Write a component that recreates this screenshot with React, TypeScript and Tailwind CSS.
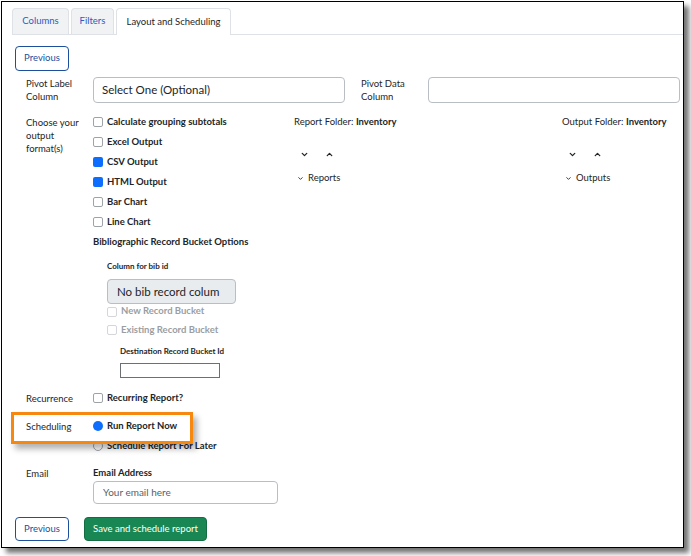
import { ChevronDown, ChevronUp } from "lucide-react";

// ── small pieces ─────────────────────────────────────────────────────────────

function Box({ checked = false, disabled = false }: { checked?: boolean; disabled?: boolean }) {
  if (checked) return <span className="inline-block h-[10px] w-[10px] shrink-0 rounded-[2px] bg-[#0d6efd]" />;
  return (
    <span
      className={`inline-block h-[10px] w-[10px] shrink-0 rounded-[2px] border bg-white ${
        disabled ? "border-[#d4d6d9]" : "border-[#9ea3a8]"
      }`}
    />
  );
}

function Check({ label, checked = false }: { label: string; checked?: boolean }) {
  return (
    <div className="flex h-[20px] items-center gap-[4px]">
      <Box checked={checked} />
      <span className="font-bold text-[#212529]">{label}</span>
    </div>
  );
}

function Label({ children }: { children: React.ReactNode }) {
  return <div className="w-[78px] shrink-0 pl-[11px] leading-[13px] text-[#212529]">{children}</div>;
}

function Folder({ title, name }: { title: string; name: string }) {
  return (
    <div className="flex flex-col">
      <div className="flex h-[20px] items-center text-[#212529]">
        {title}&nbsp;<span className="font-bold">Inventory</span>
      </div>
      <div className="mt-[16px] flex h-[12px] items-center gap-[16px] pl-[6px]">
        <ChevronDown size={9} strokeWidth={3.5} className="text-[#212529]" />
        <ChevronUp size={9} strokeWidth={3.5} className="text-[#212529]" />
      </div>
      <div className="mt-[12px] flex h-[12px] items-center gap-[4px] pl-[3px] text-[#212529]">
        <ChevronDown size={7} strokeWidth={3} />
        <span>{name}</span>
      </div>
    </div>
  );
}

// ── page ──────────────────────────────────────────────────────────────────────

export default function App() {
  return (
    <div
      className="relative h-[556px] w-[691px] overflow-hidden bg-white text-[9.5px]"
      style={{ fontFamily: 'Lato, "Noto Sans", sans-serif' }}
    >
      <div className="ml-[1px] mt-[1px] h-[547px] w-[683px] border border-black bg-white pt-[7px] shadow-[5px_5px_5px_rgba(0,0,0,0.55)]">
        {/* Tabs */}
        <div className="ml-[10px] flex h-[26px] items-end gap-[2px] border-b border-[#dee2e6]">
          <div className="flex h-[26px] w-[57px] items-center justify-center rounded-t-[4px] border border-b-0 border-[#dee2e6] bg-[#f1f2f4] text-[#2c5bc4]">
            Columns
          </div>
          <div className="flex h-[26px] w-[43px] items-center justify-center rounded-t-[4px] border border-b-0 border-[#dee2e6] bg-[#f1f2f4] text-[#2c5bc4]">
            Filters
          </div>
          <div className="-mb-px flex h-[27px] w-[115px] items-center justify-center rounded-t-[4px] border border-b-0 border-[#dee2e6] bg-white text-[#212529]">
            Layout and Scheduling
          </div>
        </div>

        <div className="pl-[13px]">
          <button className="mt-[11px] flex h-[25px] w-[54px] items-center justify-center rounded-[4px] border border-[#1c4f9c] text-[#1c4f9c]">
            Previous
          </button>

          {/* Pivot row */}
          <div className="mt-[6px] flex h-[26px] items-center">
            <Label>
              Pivot Label
              <br />
              Column
            </Label>
            <div className="flex h-[26px] w-[252px] items-center rounded-[4px] border border-[#b9bec4] pl-[8px] text-[11.5px] text-[#212529]">
              Select One (Optional)
            </div>
            <div className="ml-[16px] w-[67px] shrink-0 leading-[13px] text-[#212529]">
              Pivot Data
              <br />
              Column
            </div>
            <div className="h-[26px] w-[252px] rounded-[4px] border border-[#b9bec4]" />
          </div>

          {/* Output formats */}
          <div className="mt-[9px] flex">
            <div className="pt-[4px]">
              <Label>
                Choose your
                <br />
                output
                <br />
                format(s)
              </Label>
            </div>
            <div className="w-[201px] shrink-0">
              <Check label="Calculate grouping subtotals" />
              <Check label="Excel Output" />
              <Check label="CSV Output" checked />
              <Check label="HTML Output" checked />
              <Check label="Bar Chart" />
              <Check label="Line Chart" />
              <div className="flex h-[20px] items-center font-bold text-[#212529]">Bibliographic Record Bucket Options</div>

              <div className="pl-[14px]">
                <div className="mt-[8px] flex h-[12px] items-center text-[8px] font-bold text-[#212529]">Column for bib id</div>
                <div className="mt-[7px] flex h-[25px] w-[129px] items-center overflow-hidden whitespace-nowrap rounded-[4px] border border-[#b9bec4] bg-[#e9ecef] pl-[9px] text-[11.5px] text-[#212529]">
                  No bib record colum
                </div>
                <div className="flex h-[15px] items-center gap-[4px] text-[#9a9ea3]">
                  <Box disabled />
                  <span className="font-bold">New Record Bucket</span>
                </div>
                <div className="flex h-[22px] items-center gap-[4px] text-[#9a9ea3]">
                  <Box disabled />
                  <span className="font-bold">Existing Record Bucket</span>
                </div>
                <div className="pl-[13px]">
                  <div className="mt-[1px] flex h-[18px] items-center text-[8px] font-bold text-[#212529]">
                    Destination Record Bucket Id
                  </div>
                  <div className="mt-[3px] h-[15px] w-[100px] border border-[#6c6f73]" />
                </div>
              </div>
            </div>
            <div className="w-[268px] shrink-0">
              <Folder title="Report Folder:" name="Reports" />
            </div>
            <div>
              <Folder title="Output Folder:" name="Outputs" />
            </div>
          </div>

          {/* Recurrence */}
          <div className="mt-[10px] flex h-[20px] items-center">
            <Label>Recurrence</Label>
            <Check label="Recurring Report?" />
          </div>

          {/* Scheduling */}
          <div className="mt-[8px] flex">
            <Label>
              <div className="flex h-[20px] items-center">Scheduling</div>
            </Label>
            <div>
              <div className="flex h-[20px] items-center gap-[4px]">
                <span className="inline-block h-[10px] w-[10px] rounded-full bg-[#0d6efd]" />
                <span className="font-bold text-[#212529]">Run Report Now</span>
              </div>
              <div className="flex h-[20px] items-center gap-[4px]">
                <span className="inline-block h-[10px] w-[10px] rounded-full border border-[#9ea3a8] bg-white" />
                <span className="font-bold text-[#212529]">Schedule Report For Later</span>
              </div>
            </div>
          </div>

          {/* Email */}
          <div className="mt-[10px] flex">
            <Label>
              <div className="flex h-[14px] items-center">Email</div>
            </Label>
            <div>
              <div className="flex h-[14px] items-center font-bold text-[#212529]">Email Address</div>
              <div className="mt-[1px] flex h-[23px] w-[185px] items-center rounded-[4px] border border-[#b9bec4] pl-[9px] text-[10px] text-[#5a5f64]">
                Your email here
              </div>
            </div>
          </div>

          {/* Footer buttons */}
          <div className="mt-[13px] flex items-center gap-[15px]">
            <button className="flex h-[24px] w-[54px] items-center justify-center rounded-[4px] border border-[#1c4f9c] text-[#1c4f9c]">
              Previous
            </button>
            <button className="flex h-[24px] w-[123px] items-center justify-center rounded-[4px] border border-[#146c43] bg-[#198754] text-white">
              Save and schedule report
            </button>
          </div>
        </div>
      </div>

      {/* annotation highlight */}
      <div className="absolute left-[11px] top-[412px] h-[32px] w-[182px] border-[3px] border-[#f7880f] shadow-[4px_5px_6px_rgba(0,0,0,0.3)]" />
    </div>
  );
}
